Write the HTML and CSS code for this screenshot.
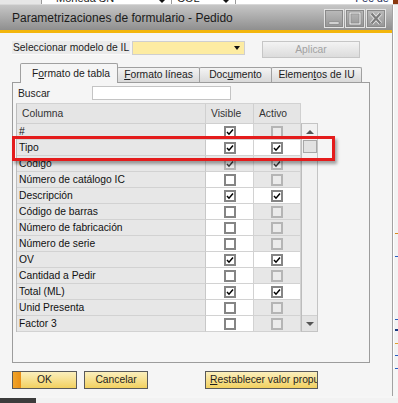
FILE: index.html
```html
<!DOCTYPE html>
<html>
<head>
<meta charset="utf-8">
<link rel="stylesheet" href="styles.css">
</head>
<body>
<div class="top-strip">
  <div class="ts-gray"></div>
  <div class="ts-field f1"><span class="ts-text">Moneda SN</span><span class="ts-arrow"></span></div>
  <div class="ts-field f2"><span class="ts-text">COL</span><span class="ts-arrow"></span></div>
  <div class="ts-blank"><span class="ts-text ts-fec">Fec de</span></div>
  <div class="ts-end"></div>
</div>
<div class="main">
  <div class="dialog">
    <div class="titlebar">
      <span class="title">Parametrizaciones de formulario - Pedido</span>
      <div class="wbtns">
        <svg class="wbtn" width="20" height="19" viewBox="0 0 20 19"><rect x="0.5" y="0.5" width="19" height="18" fill="none" stroke="#e4e4e4"/><rect x="1.5" y="1.5" width="17" height="16" fill="none" stroke="#8a8a8a"/><rect x="5" y="13" width="10" height="2" fill="#f0f0f0" stroke="#7a7a7a" stroke-width="0.5"/></svg>
        <svg class="wbtn" width="20" height="19" viewBox="0 0 20 19"><rect x="0.5" y="0.5" width="19" height="18" fill="none" stroke="#e4e4e4"/><rect x="1.5" y="1.5" width="17" height="16" fill="none" stroke="#8a8a8a"/><rect x="5" y="4" width="10" height="11" fill="none" stroke="#7a7a7a" stroke-width="2.4"/><rect x="5" y="4" width="10" height="11" fill="none" stroke="#f0f0f0" stroke-width="1.2"/></svg>
        <svg class="wbtn" width="20" height="19" viewBox="0 0 20 19"><rect x="0.5" y="0.5" width="19" height="18" fill="none" stroke="#e4e4e4"/><rect x="1.5" y="1.5" width="17" height="16" fill="none" stroke="#8a8a8a"/><path d="M5.5 4.5 L14.5 14.5 M14.5 4.5 L5.5 14.5" stroke="#e8e8e8" stroke-width="4"/><path d="M5.5 4.5 L14.5 14.5 M14.5 4.5 L5.5 14.5" stroke="#7c7c7c" stroke-width="2.2"/></svg>
      </div>
    </div>
    <div class="accent"></div>
    <div class="dbody">
      <div class="row1">
        <div class="lbl">Seleccionar modelo de IL</div>
        <div class="combo"><span class="combo-arrow"></span></div>
        <div class="btn-disabled">Aplicar</div>
      </div>
      <div class="tabs">
        <div class="tab active">F<u>o</u>rmato de tabla</div>
        <div class="tab t2"><u>F</u>ormato líneas</div>
        <div class="tab t3">Doc<u>u</u>mento</div>
        <div class="tab t4">Elemen<u>t</u>os de IU</div>
      </div>
      <div class="panel">
        <div class="search"><span class="search-lbl">Buscar</span><div class="search-input"></div></div>
        <div class="gridwrap">
          <div class="grid">
            <div class="hc c1">Columna</div><div class="hc">Visible</div><div class="hc">Activo</div>

            <div class="c c1">#</div>
            <div class="c w"><span class="cb"><svg viewBox="0 0 8 8"><path d="M1 4 L3 6.2 L7 1.6" fill="none" stroke="#000" stroke-width="1.5"/></svg></span></div>
            <div class="c g"><span class="cb dis"></span></div>

            <div class="c c1">Tipo</div>
            <div class="c w"><span class="cb"><svg viewBox="0 0 8 8"><path d="M1 4 L3 6.2 L7 1.6" fill="none" stroke="#000" stroke-width="1.5"/></svg></span></div>
            <div class="c w"><span class="cb"><svg viewBox="0 0 8 8"><path d="M1 4 L3 6.2 L7 1.6" fill="none" stroke="#000" stroke-width="1.5"/></svg></span></div>

            <div class="c c1">Codigo</div>
            <div class="c g"><span class="cb dis"><svg viewBox="0 0 8 8"><path d="M1 4 L3 6.2 L7 1.6" fill="none" stroke="#3a3a3a" stroke-width="1.5"/></svg></span></div>
            <div class="c g"><span class="cb dis"><svg viewBox="0 0 8 8"><path d="M1 4 L3 6.2 L7 1.6" fill="none" stroke="#3a3a3a" stroke-width="1.5"/></svg></span></div>

            <div class="c c1">Número de catálogo IC</div>
            <div class="c w"><span class="cb"></span></div>
            <div class="c g"><span class="cb dis"></span></div>

            <div class="c c1">Descripción</div>
            <div class="c w"><span class="cb"><svg viewBox="0 0 8 8"><path d="M1 4 L3 6.2 L7 1.6" fill="none" stroke="#000" stroke-width="1.5"/></svg></span></div>
            <div class="c w"><span class="cb"><svg viewBox="0 0 8 8"><path d="M1 4 L3 6.2 L7 1.6" fill="none" stroke="#000" stroke-width="1.5"/></svg></span></div>

            <div class="c c1">Código de barras</div>
            <div class="c w"><span class="cb"></span></div>
            <div class="c g"><span class="cb dis"></span></div>

            <div class="c c1">Número de fabricación</div>
            <div class="c w"><span class="cb"></span></div>
            <div class="c g"><span class="cb dis"></span></div>

            <div class="c c1">Número de serie</div>
            <div class="c w"><span class="cb"></span></div>
            <div class="c g"><span class="cb dis"></span></div>

            <div class="c c1">OV</div>
            <div class="c w"><span class="cb"><svg viewBox="0 0 8 8"><path d="M1 4 L3 6.2 L7 1.6" fill="none" stroke="#000" stroke-width="1.5"/></svg></span></div>
            <div class="c w"><span class="cb"><svg viewBox="0 0 8 8"><path d="M1 4 L3 6.2 L7 1.6" fill="none" stroke="#000" stroke-width="1.5"/></svg></span></div>

            <div class="c c1">Cantidad a Pedir</div>
            <div class="c w"><span class="cb"></span></div>
            <div class="c g"><span class="cb dis"></span></div>

            <div class="c c1">Total (ML)</div>
            <div class="c w"><span class="cb"><svg viewBox="0 0 8 8"><path d="M1 4 L3 6.2 L7 1.6" fill="none" stroke="#000" stroke-width="1.5"/></svg></span></div>
            <div class="c w"><span class="cb"><svg viewBox="0 0 8 8"><path d="M1 4 L3 6.2 L7 1.6" fill="none" stroke="#000" stroke-width="1.5"/></svg></span></div>

            <div class="c c1">Unid Presenta</div>
            <div class="c w"><span class="cb"></span></div>
            <div class="c g"><span class="cb dis"></span></div>

            <div class="c c1">Factor 3</div>
            <div class="c w"><span class="cb"></span></div>
            <div class="c g"><span class="cb dis"></span></div>
          </div>
          <div class="scroll">
            <div class="sb-up"><span class="tri-up"></span></div>
            <div class="sb-thumb"></div>
            <div class="sb-track"></div>
            <div class="sb-down"><span class="tri-down"></span></div>
          </div>
        </div>
      </div>
      <div class="buttons">
        <div class="btn ok">OK</div>
        <div class="btn cancel">Cancelar</div>
        <div class="btn reset"><u>R</u>establecer valor propuesto</div>
      </div>
    </div>
  </div>
  <div class="side">
    <span class="mk m1"></span>
    <span class="mk m2"></span>
    <span class="mk m3"></span>
    <span class="mk m4"></span>
    <span class="mk m5"></span>
    <span class="mk m6"></span>
    <span class="mk m7"></span>
  </div>
</div>
<div class="bottom-strip"><div class="dark"></div></div>
<div class="highlight"></div>
</body>
</html>
```

FILE: styles.css
```css
* { box-sizing: border-box; }
html, body { margin: 0; padding: 0; }
body {
  width: 398px;
  height: 403px;
  overflow: hidden;
  position: relative;
  background: #f6f6f6;
  font-family: "Liberation Sans", Arial, sans-serif;
  font-size: 10.3px;
  color: #1c1c1c;
}

/* background window strip at the top */
.top-strip {
  height: 5px;
  display: flex;
  background: #ffffff;
  overflow: hidden;
  border-bottom: 1px solid #d8d8d8;
}
.ts-gray { width: 42px; background: #e6e6e6; border-right: 1px solid #9a9a9a; }
.ts-field { position: relative; display: flex; justify-content: space-between; padding-left: 14px; border-right: 1px solid #9a9a9a; }
.f1 { width: 130px; }
.f2 { width: 64px; padding-left: 5px; }
.ts-text { font-size: 11px; line-height: 11px; margin-top: -7px; color: #222; }
.ts-arrow { width: 0; height: 0; margin: 0 5px 0 0; border-left: 4px solid transparent; border-right: 4px solid transparent; border-top: 4px solid #111; margin-top: -1px; }
.ts-blank { flex: 1; display: flex; justify-content: flex-end; padding-right: 4px; }
.ts-fec { color: #1a2a5a; }
.ts-end { width: 5px; background: #8a3a10; }

.main { display: flex; }

.dialog {
  width: 393px;
  border-right: 1px solid #a2a2a2;
  background: #f5f5f5;
}

.titlebar {
  height: 25px;
  background: linear-gradient(#c6c6c6, #8f8f8f);
  display: flex;
  align-items: center;
  justify-content: space-between;
  padding: 0 6px 0 12px;
}
.title { font-size: 12px; color: #1a1a1a; margin-top: 1px; }
.wbtns { display: flex; gap: 1px; margin-top: 2px; }
.wbtn { display: block; }

.accent { height: 3px; background: #f3b60c; }

.dbody { padding: 8px 0 7px 12px; }

.row1 { display: flex; align-items: flex-start; height: 17px; }
.lbl {
  width: 118px;
  height: 14px;
  line-height: 14px;
  padding-left: 1px;
  background: #ebebeb;
  border-bottom: 1px solid #fafafa;
  white-space: nowrap;
}
.combo {
  width: 113px;
  height: 14px;
  margin-left: 2px;
  background: #fdeca2;
  border: 1px solid #cfcfcf;
  display: flex;
  justify-content: flex-end;
  align-items: center;
  padding-right: 4px;
}
.combo-arrow { width: 0; height: 0; border-left: 3.5px solid transparent; border-right: 3.5px solid transparent; border-top: 4px solid #111; }
.btn-disabled {
  width: 98px;
  height: 17px;
  margin-left: 17px;
  border: 1px solid #c6c6c6;
  background: linear-gradient(#f3f3f3, #dcdcdc);
  color: #a2a2a2;
  text-align: center;
  line-height: 15px;
}

.tabs {
  display: flex;
  align-items: flex-end;
  height: 19px;
  margin-top: 5px;
  padding-left: 8px;
  position: relative;
  z-index: 1;
}
.tab {
  height: 15px;
  border: 1px solid #a0a0a0;
  border-bottom: none;
  background: linear-gradient(#f4f4f4, #d9d9d9);
  text-align: center;
  line-height: 14px;
  white-space: nowrap;
  margin-right: -1px;
  border-radius: 2px 2px 0 0;
}
.tab u { text-decoration: underline; }
.tab.active {
  width: 98px;
  height: 20px;
  margin-bottom: -1px;
  background: #f5f5f5;
  line-height: 19px;
  padding-left: 4px;
}
.t2 { width: 83px; }
.t3 { width: 73px; }
.t4 { width: 91px; }

.panel {
  width: 358px;
  height: 281px;
  border: 1px solid #9c9c9c;
  background: #f5f5f5;
  padding: 3px 0 0 3px;
}

.search { display: flex; align-items: center; height: 14px; padding-left: 2px; }
.search-lbl { width: 74px; }
.search-input { width: 139px; height: 14px; background: #fff; border: 1px solid #c4c4c4; }

.gridwrap { display: flex; margin-top: 3px; }
.grid {
  display: grid;
  grid-template-columns: 189px 48px 47px;
  grid-template-rows: 20px repeat(13, 16px);
  border-top: 1px solid #d2d2d2;
  border-left: 1px solid #bdbdbd;
}
.hc {
  background: #e5e5e5;
  border-right: 1px solid #d0d0d0;
  border-bottom: 1px solid #d0d0d0;
  padding-left: 5px;
  line-height: 19px;
  color: #333;
}
.hc.c1 { padding-left: 5px; }
.c {
  border-right: 1px solid #d2d2d2;
  border-bottom: 1px solid #d2d2d2;
  display: flex;
  align-items: center;
  justify-content: center;
}
.c.c1 {
  background: #e7e7e7;
  justify-content: flex-start;
  padding-left: 2px;
  white-space: nowrap;
  color: #111;
  border-right-color: #c8c8c8;
}
.c.w { background: #ffffff; }
.c.g { background: #e7e7e7; }

.cb {
  width: 12px;
  height: 12px;
  border: 2px solid #858585;
  background: #fff;
  display: flex;
  align-items: center;
  justify-content: center;
}
.cb svg { width: 8px; height: 8px; display: block; }
.cb.dis { border-color: #b5b5b5; background: #ebebeb; }

.scroll {
  width: 17px;
  height: 209px;
  margin-top: 20px;
  border: 1px solid #c4c4c4;
  border-left: 1px solid #bcbcbc;
  background: #f1f1f1;
  display: flex;
  flex-direction: column;
  align-items: center;
}
.sb-up { width: 15px; height: 15px; display: flex; align-items: center; justify-content: center; }
.tri-up { width: 0; height: 0; border-left: 4px solid transparent; border-right: 4px solid transparent; border-bottom: 4px solid #555; }
.sb-thumb { width: 14px; height: 13px; margin-top: 1px; border: 1px solid #a8a8a8; background: #e2e2e2; }
.sb-track { flex: 1; }
.sb-down { width: 15px; height: 16px; background: #e3e3e3; border-top: 1px solid #d0d0d0; display: flex; align-items: center; justify-content: center; }
.tri-down { width: 0; height: 0; border-left: 4px solid transparent; border-right: 4px solid transparent; border-top: 4px solid #555; }

.buttons { display: flex; margin-top: 8px; }
.btn {
  height: 18px;
  border: 1px solid #5a5a5a;
  background: linear-gradient(#fbefbd, #f2d160);
  text-align: center;
  line-height: 16px;
  color: #1e1e1e;
  white-space: nowrap;
  overflow: hidden;
}
.ok {
  width: 65px;
  background: linear-gradient(to right, #f0a52c 0, #e98f16 8px, transparent 8px), linear-gradient(#fbefbd, #f2d160);
}
.cancel { width: 64px; margin-left: 7px; }
.reset { width: 113px; margin-left: 57px; text-align: left; padding-left: 4px; }

.side {
  width: 5px;
  height: 364px;
  background: #f3f3f3;
  border-left: 1px solid #ffffff;
  display: flex;
  flex-direction: column;
  align-items: flex-end;
}
.mk { display: block; width: 3px; height: 4px; background: #2a5fc0; }
.m1 { margin-top: 228px; background: #d88a20; }
.m2 { margin-top: 22px; }
.m3 { margin-top: 62px; }
.m4 { margin-top: 9px; background: #1a3a80; }
.m5 { margin-top: 12px; background: #e0a030; }
.m6 { margin-top: 11px; }
.m7 { margin-top: 12px; }

.bottom-strip { height: 10px; background: #f2f2f2; }
.dark { width: 36px; height: 10px; background: #3c3c3c; margin-top: 2px; }

.highlight {
  position: absolute;
  left: 12px;
  top: 136px;
  width: 323px;
  height: 25px;
  border: 3px solid #e41c1c;
  box-shadow: 2px 3px 3px rgba(0, 0, 0, 0.35);
}
```
